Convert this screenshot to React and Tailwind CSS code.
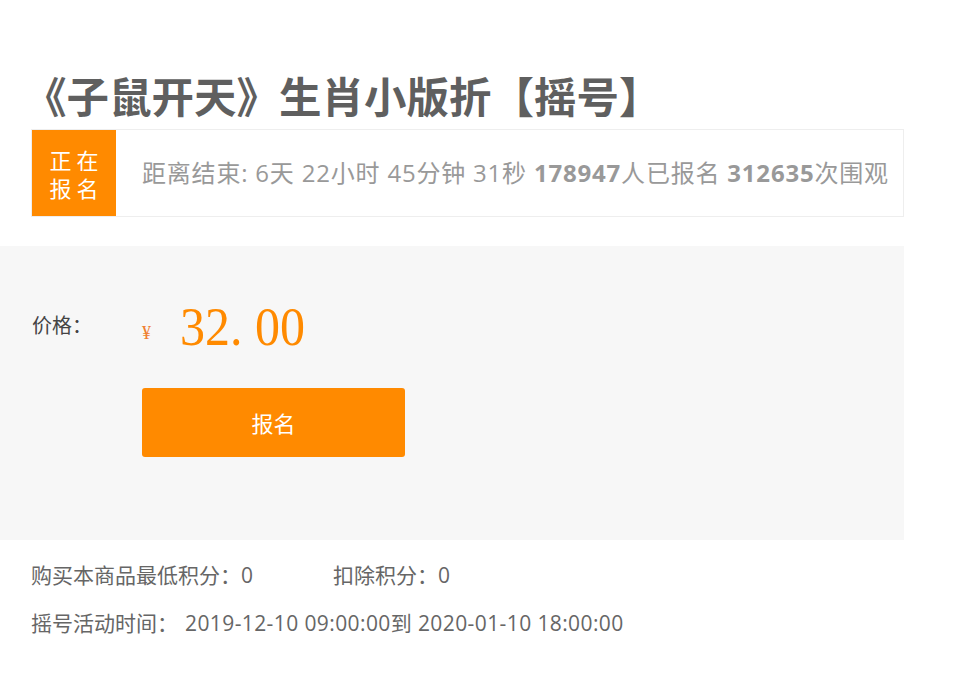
export default function App() {
  const sans = { fontFamily: '"Open Sans", "Noto Sans CJK SC", "Noto Sans", sans-serif' };
  const serif = { fontFamily: '"Liberation Serif", "Noto Sans CJK SC", serif' };
  return (
    <div className="w-[977px] h-[693px] bg-white" style={sans}>
      <div className="w-[904px] pt-[68px]">
        <h1 className="pl-[24px] text-[42.5px] leading-[54px] font-bold text-[#5f5f5f]" style={{ fontFamily: '"Noto Sans CJK SC", sans-serif' }}>
          《子鼠开天》生肖小版折【摇号】
        </h1>
        <div className="ml-[31px] mt-[7px] h-[88px] border border-[#eeeeee] flex items-center">
          <div className="w-[84px] h-[86px] bg-[#ff8a00] text-white text-[22px] leading-[28px] flex flex-col items-center justify-center tracking-[5px] pl-[5px]" style={{ fontFamily: '"Noto Sans CJK SC", sans-serif' }}>
            <span>正在</span>
            <span>报名</span>
          </div>
          <div className="pl-[26px] text-[24px] tracking-[0.8px] text-[#999999] whitespace-nowrap">
            距离结束: 6天 22小时 45分钟 31秒 <b className="font-bold">178947</b>人已报名 <b className="font-bold">312635</b>次围观
          </div>
        </div>
        <div className="mt-[29px] h-[294px] bg-[#f7f7f7] pt-[52px]">
          <div className="flex items-center h-[56px]">
            <span className="pl-[32px] w-[142px] text-[20px] text-[#444]">价格：</span>
            <span className="text-[18px] text-[#f08030] mt-[14px]" style={serif}>¥</span>
            <span className="ml-[29px] text-[50px] leading-[56px] text-[#ff8a00] inline-block scale-y-[1.1]" style={serif}>32. 00</span>
          </div>
          <div className="pl-[142px] mt-[34px]">
            <button className="w-[263px] h-[69px] bg-[#ff8a00] rounded-[3px] text-white text-[22px]" style={{ fontFamily: '"Noto Sans CJK SC", sans-serif' }}>报名</button>
          </div>
        </div>
        <div className="pl-[31px] pt-[20px] text-[21px] text-[#666666] leading-[30px]">
          <div className="flex">
            <span className="w-[302px]">购买本商品最低积分：0</span>
            <span>扣除积分：0</span>
          </div>
          <div className="mt-[18px] whitespace-nowrap flex">
            <span className="w-[154px]">摇号活动时间：</span>
            <span className="tracking-[0.4px]">2019-12-10 09:00:00到 2020-01-10 18:00:00</span>
          </div>
        </div>
      </div>
    </div>
  );
}
